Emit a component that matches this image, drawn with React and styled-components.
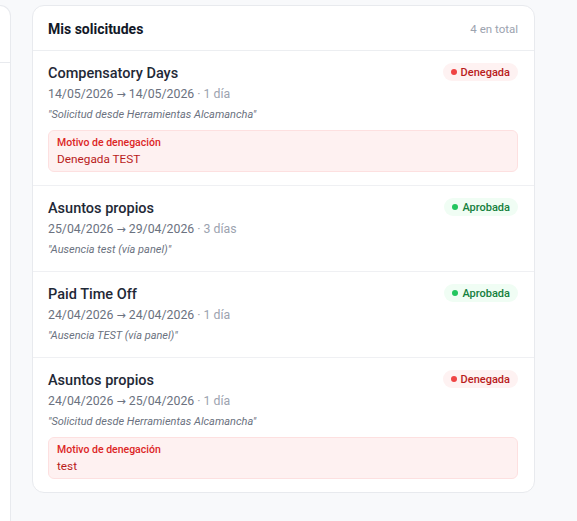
import React from "react";
import styled, { createGlobalStyle } from "styled-components";

const Global = createGlobalStyle`
  html, body { margin: 0; padding: 0; background: #f8f9fb; }
  body { font-family: Roboto, "Noto Sans", sans-serif; color: #1f2937; }
  * { box-sizing: border-box; }
`;

const Page = styled.div`
  display: flex;
  align-items: flex-start;
  gap: 21px;
  padding-top: 5px;
  min-height: 521px;
  overflow: hidden;
`;

const SidePanel = styled.aside`
  width: 11px;
  height: 530px;
  background: #fff;
  border: 1px solid #e8eaee;
  border-left: none;
  border-bottom: none;
  border-top-right-radius: 12px;
  flex-shrink: 0;
`;

const SideHeader = styled.div`
  height: 57px;
  border-bottom: 1px solid #e8eaee;
`;

const Card = styled.section`
  width: 503px;
  background: #fff;
  border: 1px solid #e8eaee;
  border-radius: 12px;
  overflow: hidden;
`;

const CardHeader = styled.header`
  height: 45px;
  padding: 1px 16px 0 15px;
  display: flex;
  align-items: center;
  justify-content: space-between;
  border-bottom: 1px solid #eceef1;
`;

const CardTitle = styled.h2`
  margin: 0;
  font-size: 14px;
  font-weight: 700;
  color: #111827;
`;

const Count = styled.span`
  font-size: 11.5px;
  color: #9ca3af;
`;

const List = styled.ul`
  list-style: none;
  margin: 0;
  padding: 0;
`;

const Item = styled.li`
  padding: 13px 16px 13px 15px;
  border-bottom: 1px solid #eff0f3;
  &:last-child { border-bottom: none; }
`;

const TopRow = styled.div`
  display: flex;
  justify-content: space-between;
  align-items: flex-start;
`;

const Info = styled.div`
  display: flex;
  flex-direction: column;
`;

const Title = styled.div`
  font-size: 14.5px;
  line-height: 20px;
  font-weight: 500;
  color: #1f2937;
`;

const Dates = styled.div`
  height: 20px;
  font-size: 12.3px;
  line-height: 20px;
  color: #6b7280;
`;

const Arrow = styled.span`
  font-family: "DejaVu Sans", sans-serif;
  font-size: 11px;
  line-height: 1;
`;

const Days = styled.span`
  color: #9ca3af;
`;

const Quote = styled.div`
  margin-top: 3px;
  font-size: 11px;
  line-height: 16px;
  font-style: italic;
  color: #6b7280;
`;

const Badge = styled.span`
  display: inline-flex;
  align-items: center;
  gap: 4px;
  height: 18px;
  margin-top: -1px;
  padding: 0 8px;
  border-radius: 9px;
  font-size: 11px;
  font-weight: 500;
  background: ${(p) => (p.$tone === "ok" ? "#f0fdf4" : "#fef2f2")};
  color: ${(p) => (p.$tone === "ok" ? "#15803d" : "#b91c1c")};
`;

const Dot = styled.span`
  width: 6px;
  height: 6px;
  border-radius: 50%;
  background: ${(p) => (p.$tone === "ok" ? "#22c55e" : "#ef4444")};
`;

const Denial = styled.div`
  margin-top: 7px;
  padding: 5px 8px 3px;
  background: #fef1f1;
  border: 1px solid #fde0e0;
  border-radius: 6px;
`;

const DenialLabel = styled.div`
  font-size: 10.5px;
  line-height: 14px;
  font-weight: 500;
  color: #dc2626;
`;

const DenialText = styled.div`
  font-size: 11.8px;
  line-height: 18px;
  color: #b91c1c;
`;

const requests = [
  {
    title: "Compensatory Days",
    from: "14/05/2026",
    to: "14/05/2026",
    days: "1 día",
    note: "\"Solicitud desde Herramientas Alcamancha\"",
    status: "Denegada",
    reason: "Denegada TEST",
  },
  {
    title: "Asuntos propios",
    from: "25/04/2026",
    to: "29/04/2026",
    days: "3 días",
    note: "\"Ausencia test (vía panel)\"",
    status: "Aprobada",
  },
  {
    title: "Paid Time Off",
    from: "24/04/2026",
    to: "24/04/2026",
    days: "1 día",
    note: "\"Ausencia TEST (vía panel)\"",
    status: "Aprobada",
  },
  {
    title: "Asuntos propios",
    from: "24/04/2026",
    to: "25/04/2026",
    days: "1 día",
    note: "\"Solicitud desde Herramientas Alcamancha\"",
    status: "Denegada",
    reason: "test",
  },
];

export default function App() {
  return (
    <>
      <Global />
      <Page>
        <SidePanel>
          <SideHeader />
        </SidePanel>
        <Card>
          <CardHeader>
            <CardTitle>Mis solicitudes</CardTitle>
            <Count>4 en total</Count>
          </CardHeader>
          <List>
            {requests.map((r, i) => {
              const tone = r.status === "Aprobada" ? "ok" : "bad";
              return (
                <Item key={i}>
                  <TopRow>
                    <Info>
                      <Title>{r.title}</Title>
                      <Dates>
                        {r.from} <Arrow>→</Arrow> {r.to} <Days>· {r.days}</Days>
                      </Dates>
                      <Quote>{r.note}</Quote>
                    </Info>
                    <Badge $tone={tone}>
                      <Dot $tone={tone} />
                      {r.status}
                    </Badge>
                  </TopRow>
                  {r.reason && (
                    <Denial>
                      <DenialLabel>Motivo de denegación</DenialLabel>
                      <DenialText>{r.reason}</DenialText>
                    </Denial>
                  )}
                </Item>
              );
            })}
          </List>
        </Card>
      </Page>
    </>
  );
}
